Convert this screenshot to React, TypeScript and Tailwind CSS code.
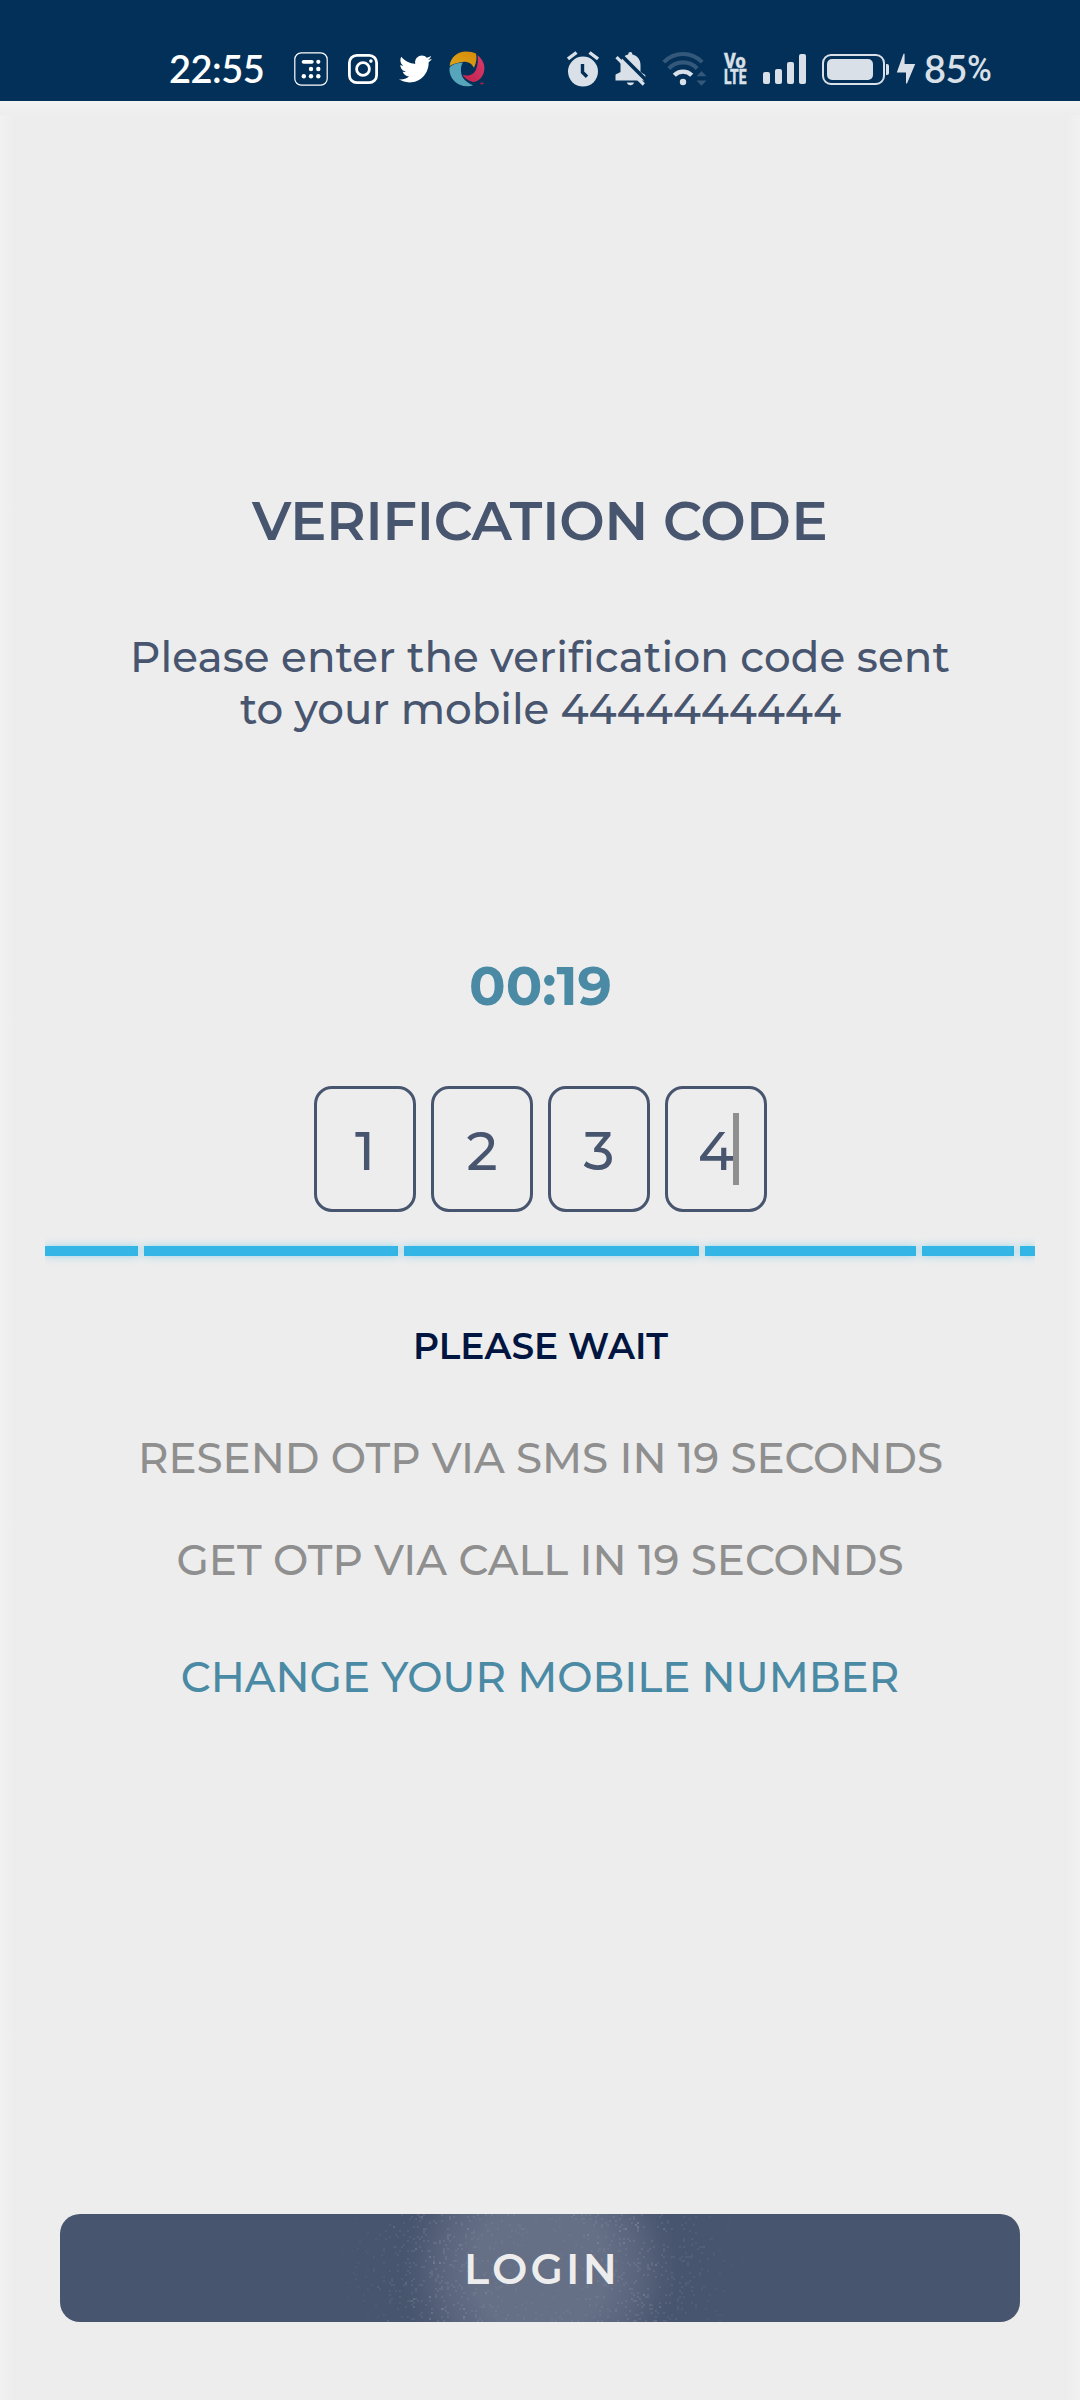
import { FaTwitter } from "react-icons/fa";

const DIGITS = ["1", "2", "3", "4"];

function CalculatorIcon() {
  return (
    <svg className="ml-[31px] h-[34px] w-[34px]" viewBox="0 0 34 34" fill="none">
      <rect x="0.8" y="0.8" width="32.4" height="32.4" rx="6.5" stroke="#fff" strokeWidth="1.2" />
      <path d="M9.6 9.8h8.2" stroke="#fff" strokeWidth="3.8" strokeLinecap="round" />
      <g fill="#fff">
        <circle cx="24.3" cy="9.8" r="2.1" />
        <circle cx="17" cy="17" r="2.2" />
        <circle cx="24.3" cy="17" r="2.2" />
        <circle cx="9.8" cy="24.2" r="2.2" />
        <circle cx="17" cy="24.2" r="2.2" />
        <circle cx="24.3" cy="24.2" r="2.2" />
      </g>
    </svg>
  );
}

function InstagramIcon() {
  return (
    <svg className="ml-5 h-[30px] w-[30px]" viewBox="0 0 30 30" fill="none" stroke="#fff">
      <rect x="1.4" y="1.4" width="27.2" height="27.2" rx="7.4" strokeWidth="2.8" />
      <circle cx="15" cy="15" r="6.4" strokeWidth="2.8" />
      <circle cx="22.9" cy="7.1" r="1.8" fill="#fff" stroke="none" />
    </svg>
  );
}

function PinwheelIcon() {
  return (
    <svg className="ml-[17px] h-[36px] w-[36px]" viewBox="0 0 36 36">
      <defs>
        <linearGradient id="gold" x1="0" y1="1" x2="1" y2="0">
          <stop offset="0" stopColor="#dda71c" />
          <stop offset="1" stopColor="#d58a08" />
        </linearGradient>
        <linearGradient id="rose" x1="0" y1="1" x2="1" y2="0">
          <stop offset="0" stopColor="#c2204a" />
          <stop offset="1" stopColor="#d83c6c" />
        </linearGradient>
      </defs>
      <path d="M0.6 15C1.6 6.500 8.500 0.600 17 0.600C21 0.600 24.500 1.300 27 2.600C28 7 27.600 11.500 25 16.800C22.500 11.500 17 9.700 11.500 11.200C7.500 12 3.500 13 0.600 15Z" fill="url(#gold)" />
      <path d="M28.600 4.200C33.500 8 36 13.500 35.300 19C34.500 26 29.500 30.800 24 31C18.500 29.500 15.300 27 13.500 23.800C20 25.800 25.300 23.500 27.200 18C28.800 13.500 29.300 9 28.600 4.200Z" fill="url(#rose)" />
      <path d="M13.800 11.600C4 12.600 0.300 15.300 0.400 18.500C0.700 28 8.500 35.300 18 35.300C20.500 35.300 22.300 35 24 34.300C16.500 31 12.400 26.500 12 20.500C11.800 17 12.300 14 13.800 11.600Z" fill="#56a5ba" />
      <path d="M31.500 32.500h3" stroke="#c2204a" strokeWidth="1.500" />
    </svg>
  );
}

function AlarmIcon() {
  return (
    <svg className="h-[36px] w-[32px]" viewBox="0 0 32 36" fill="#d9e0e8">
      <path d="M1 8L9.500 1.500M31 8L22.500 1.500" stroke="#d9e0e8" strokeWidth="3.400" />
      <circle cx="16" cy="20.600" r="15" />
      <path d="M15.500 13V21.300L20 25.800" stroke="#033058" strokeWidth="3.400" fill="none" />
    </svg>
  );
}

function MutedBellIcon() {
  return (
    <svg className="ml-[16px] h-[34px] w-[32px]" viewBox="0 0 32 34">
      <path d="M5.500 20V12.800C5.500 7.500 8.500 3.800 13.200 2.600V2.200A2.100 2.100 0 0 1 17.400 2.200V2.600C22 3.800 25.500 7.500 25.500 12.800V20L30.300 23V28.600H0.500V23C0.500 22 3 21.500 5.500 20Z" fill="#d9e0e8" />
      <path d="M11.800 30.600H19C18.600 34 12.400 34 11.800 30.600Z" fill="#d9e0e8" />
      <path d="M4 1L32 29" stroke="#033058" strokeWidth="3.600" />
      <path d="M1.500 5.200L28.800 32.500" stroke="#d9e0e8" strokeWidth="3.200" />
    </svg>
  );
}

function WifiIcon() {
  return (
    <svg className="ml-[15px] h-[36px] w-[46px]" viewBox="0 0 46 36" fill="none">
      <path d="M2.300 12.200A26.500 26.500 0 0 1 40.700 12.200" transform="translate(-0.500 -1)" stroke="#335879" strokeWidth="4" />
      <path d="M6.800 17.500A19.500 19.500 0 0 1 35.200 17.500" stroke="#335879" strokeWidth="4.200" />
      <path d="M12.300 24.300A12.200 12.200 0 0 1 29.700 24.300" stroke="#d9e0e8" strokeWidth="4.400" />
      <circle cx="21" cy="31" r="3.200" fill="#d9e0e8" />
      <path d="M34.500 25.300L39.500 20L44.500 25.300ZM34.500 29.500H44.500L39.500 34.800Z" fill="#335879" />
    </svg>
  );
}

function VolteIcon() {
  return (
    <svg className="ml-[15px] h-[34px] w-[26px] overflow-visible" viewBox="0 0 26 34" fill="#d9e0e8" stroke="#d9e0e8" strokeWidth="0.4" fontFamily="Roboto, sans-serif" fontWeight="800">
      <text x="1" y="15.600" fontSize="19.500" textLength="21.500" lengthAdjust="spacingAndGlyphs">Vo</text>
      <text x="1" y="31.600" fontSize="19.500" textLength="22.500" lengthAdjust="spacingAndGlyphs">LTE</text>
    </svg>
  );
}

function StatusBar() {
  return (
    <header className="flex h-[101px] items-start bg-[#033058] pl-[169px] pt-[51px] font-['Lato',sans-serif] font-semibold">
      <span className="-mt-px w-[94px] whitespace-nowrap text-[38px] leading-[36px] tracking-[-0.5px] text-white">22:55</span>
      <div className="flex h-9 items-center">
        <CalculatorIcon />
        <InstagramIcon />
        <FaTwitter className="ml-[21px] h-[34px] w-[33px] text-white" />
        <PinwheelIcon />
      </div>
      <div className="ml-[82px] flex h-9 items-center">
        <AlarmIcon />
        <MutedBellIcon />
        <WifiIcon />
        <VolteIcon />
        <div className="ml-[14px] flex h-[30px] items-end gap-[5px]">
          <span className="h-3 w-[7px] rounded-[2px] bg-[#d9e0e8]" />
          <span className="h-[15px] w-[7px] rounded-[2px] bg-[#d9e0e8]" />
          <span className="h-[22px] w-[7px] rounded-[2px] bg-[#d9e0e8]" />
          <span className="h-[30px] w-[7px] rounded-[2px] bg-[#d9e0e8]" />
        </div>
        <div className="ml-4 flex h-[31px] w-[63px] rounded-[9px] border-2 border-[#d9e0e8] p-[3px]">
          <span className="w-[46px] rounded-[5px] bg-[#d9e0e8]" />
        </div>
        <span className="ml-px h-[11px] w-[3px] rounded-r-[2px] bg-[#d9e0e8]" />
        <svg className="ml-[7px] h-[32px] w-[20px]" viewBox="0 0 20 32" fill="#d9e0e8">
          <path d="M8.600 0.800V11H19.200L11 30.500H10V19.500H0.800L7.500 0.800Z" />
        </svg>
      </div>
      <span className="-mt-px ml-[8px] flex text-[38px] leading-[36px] tracking-[-0.5px] text-[#d9e0e8]">
        85
        <span className="mt-px origin-left scale-x-[0.91] font-['Roboto',sans-serif] text-[37px] font-medium">%</span>
      </span>
    </header>
  );
}

type Speck = { x: number; y: number; o: number };

/* Deterministic sparkle particles of the touch ripple, on a 2px grid. */
function makeSpecks(): Speck[] {
  const specks: Speck[] = [];
  let seed = 7919;
  const next = () => {
    seed = (seed * 1103515245 + 12345) % 2147483648;
    return seed / 2147483648;
  };
  for (let i = 0; i < 2000; i++) {
    const x = Math.floor(next() * 215) * 2;
    const y = Math.floor(next() * 54) * 2;
    const d = Math.hypot(x - 215, y - 54);
    const strength = Math.max(0, 1 - Math.abs(d - 105) / 100);
    if (next() < strength * 0.8) specks.push({ x, y, o: 0.02 + strength * 0.08 });
  }
  return specks;
}

const SPECKS = makeSpecks();

function LoginButton() {
  return (
    <button className="relative mx-[60px] mt-[511px] flex h-[108px] items-center justify-center overflow-hidden rounded-[20px] bg-[#48556f] bg-[radial-gradient(circle_at_center,#656f86_0,#656f86_66px,#5b657e_96px,#4d5973_122px,#48556f_138px)]">
      <svg className="absolute left-[265px] top-0 h-[108px] w-[430px]" viewBox="0 0 430 108" fill="#dfe8dd" shapeRendering="crispEdges">
        {SPECKS.map((s, i) => (
          <rect key={i} x={s.x} y={s.y} width="2" height="2" opacity={s.o} />
        ))}
      </svg>
      <span className="relative mt-[2px] pl-1 text-[42px] font-semibold leading-[52px] tracking-[3.2px] text-[#ededed]">LOGIN</span>
    </button>
  );
}

function CodeInput() {
  return (
    <div className="mt-[67px] flex justify-center gap-[15px] pl-[1px]">
      {DIGITS.map((d, i) => (
        <div key={d} className="relative flex h-[126px] w-[102px] items-center justify-center rounded-[18px] border-[3px] border-[#48556f] pt-[3px] text-[54px] font-medium leading-[66px]">
          {d}
          {i === 3 && <span className="absolute left-[65px] top-6 h-[72px] w-[6px] bg-[#8f8f8f]" />}
        </div>
      ))}
    </div>
  );
}

function ProgressBar() {
  const bar = "h-[10px] bg-[#33b5e5] shadow-[0_0_8px_rgba(51,181,229,0.45)]";
  return (
    <div className="mx-[45px] mt-6 flex h-[30px] items-center gap-[6px] overflow-hidden">
      <span className={`${bar} w-[93px]`} />
      <span className={`${bar} w-[254px]`} />
      <span className={`${bar} w-[295px]`} />
      <span className={`${bar} w-[211px]`} />
      <span className={`${bar} w-[92px]`} />
      <span className={`${bar} w-[15px]`} />
    </div>
  );
}

export default function App() {
  return (
    <div className="flex h-[2400px] w-[1080px] flex-col overflow-hidden bg-[#ededed] font-['Montserrat',sans-serif] text-[#48556f]">
      <StatusBar />
      <main className="flex flex-1 flex-col bg-[linear-gradient(to_right,#f1f1f1,#ededed_14px,#ededed_1066px,#f1f1f1)] text-center">
        <div className="h-[14px] bg-gradient-to-b from-[#f3f3f3] to-[#ededed]" />
        <h1 className="mt-[373px] text-[54px] font-semibold leading-[66px]">
          <span className="tracking-[-0.2px]">VERIFICATION</span> <span className="tracking-[0.5px]">CODE</span>
        </h1>
        <p className="mt-[77px] text-[42px] font-medium leading-[52px] [font-variant-ligatures:none]">
          <span className="tracking-[0.11px]">Please enter the verification code sent</span>
          <br />
          <span className="pl-px tracking-[-0.05px]">to your mobile 4444444444</span>
        </p>
        <p className="mt-[218px] pl-px text-[54px] font-bold leading-[66px] text-[#4a8aa4]">00:19</p>
        <CodeInput />
        <ProgressBar />
        <p className="mt-[58px] pl-px text-[36px] font-semibold leading-[44px] text-[#001540]">PLEASE WAIT</p>
        <p className="mt-[64px] pl-px text-[42px] font-medium leading-[52px] tracking-[-0.03px] text-[#8f8f8f]">RESEND OTP VIA SMS IN 19 SECONDS</p>
        <p className="mt-[50px] text-[42px] font-medium leading-[52px] text-[#8f8f8f]">GET OTP VIA CALL IN 19 SECONDS</p>
        <p className="mt-[65px] text-[42px] font-medium leading-[52px] tracking-[-0.05px] text-[#4a8aa4]">CHANGE YOUR MOBILE NUMBER</p>
        <LoginButton />
      </main>
    </div>
  );
}
